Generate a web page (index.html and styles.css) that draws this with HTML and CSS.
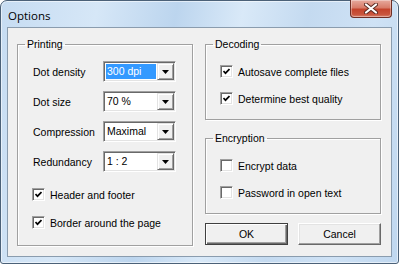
FILE: index.html
```html
<!DOCTYPE html>
<html lang="en">
<head>
  <meta charset="UTF-8" />
  <title>Options</title>
  <link rel="stylesheet" href="styles.css">
</head>
<body>
  <div class="window">
    <div class="titlebar">
      <span class="title">Options</span>
      <button class="close" type="button" aria-label="Close">
        <svg width="14" height="11" viewBox="0 0 14 11">
          <path d="M2 1.5 L12 9.5 M12 1.5 L2 9.5" stroke="#5a2a22" stroke-width="4" stroke-linecap="round" />
          <path d="M2 1.5 L12 9.5 M12 1.5 L2 9.5" stroke="#ffffff" stroke-width="2.2" stroke-linecap="round" />
        </svg>
      </button>
    </div>

    <div class="client">
      <fieldset class="group printing">
        <legend>Printing</legend>
        <div class="fields">
          <label>Dot density</label>
          <div class="combo">
            <span class="value selected">300 dpi</span>
            <span class="drop"><svg width="7" height="4" viewBox="0 0 7 4"><path d="M0 0 H7 L3.5 4 Z" fill="#000" /></svg></span>
          </div>

          <label>Dot size</label>
          <div class="combo">
            <span class="value">70 %</span>
            <span class="drop"><svg width="7" height="4" viewBox="0 0 7 4"><path d="M0 0 H7 L3.5 4 Z" fill="#000" /></svg></span>
          </div>

          <label>Compression</label>
          <div class="combo">
            <span class="value">Maximal</span>
            <span class="drop"><svg width="7" height="4" viewBox="0 0 7 4"><path d="M0 0 H7 L3.5 4 Z" fill="#000" /></svg></span>
          </div>

          <label>Redundancy</label>
          <div class="combo">
            <span class="value">1 : 2</span>
            <span class="drop"><svg width="7" height="4" viewBox="0 0 7 4"><path d="M0 0 H7 L3.5 4 Z" fill="#000" /></svg></span>
          </div>
        </div>

        <div class="checks">
          <label class="check"><span class="box"><svg width="7" height="7" viewBox="0 0 7 7"><path d="M0.5 3 L2.5 5.2 L6.5 1" stroke="#000" stroke-width="1.7" fill="none" /></svg></span>Header and footer</label>
          <label class="check"><span class="box"><svg width="7" height="7" viewBox="0 0 7 7"><path d="M0.5 3 L2.5 5.2 L6.5 1" stroke="#000" stroke-width="1.7" fill="none" /></svg></span>Border around the page</label>
        </div>
      </fieldset>

      <div class="side">
        <fieldset class="group small">
          <legend>Decoding</legend>
          <div class="checks">
            <label class="check"><span class="box"><svg width="7" height="7" viewBox="0 0 7 7"><path d="M0.5 3 L2.5 5.2 L6.5 1" stroke="#000" stroke-width="1.7" fill="none" /></svg></span>Autosave complete files</label>
            <label class="check"><span class="box"><svg width="7" height="7" viewBox="0 0 7 7"><path d="M0.5 3 L2.5 5.2 L6.5 1" stroke="#000" stroke-width="1.7" fill="none" /></svg></span>Determine best quality</label>
          </div>
        </fieldset>

        <fieldset class="group small">
          <legend>Encryption</legend>
          <div class="checks">
            <label class="check"><span class="box"></span>Encrypt data</label>
            <label class="check"><span class="box"></span>Password in open text</label>
          </div>
        </fieldset>

        <div class="buttons">
          <button class="btn default" type="button">OK</button>
          <button class="btn" type="button">Cancel</button>
        </div>
      </div>
    </div>
  </div>
</body>
</html>
```

FILE: styles.css
```css
* {
  box-sizing: border-box;
}

body {
  margin: 0;
  background: #ffffff;
  font-family: "Liberation Sans", Arial, sans-serif;
  font-size: 10.5px;
  color: #000;
}

.window {
  width: 399px;
  height: 264px;
  display: flex;
  flex-direction: column;
  padding: 0 6px 6px;
  border: 1px solid #4b6178;
  border-radius: 7px 7px 3px 3px;
  background: linear-gradient(100deg, #c6dcf2 0%, #d6e7f7 22%, #bcd5ee 40%, #d9e9f8 55%, #c4daf0 70%, #cfe2f5 85%, #bfd7ef 100%);
  box-shadow: inset 0 0 0 1px rgba(255, 255, 255, 0.55);
}

/* title bar */

.titlebar {
  height: 26px;
  display: flex;
  justify-content: space-between;
  align-items: flex-start;
}

.title {
  padding: 7px 0 0 1px;
  font-family: "Open Sans", sans-serif;
  font-size: 11.5px;
  line-height: 15px;
  color: #000;
}

.close {
  width: 42px;
  height: 18px;
  margin-top: -1px;
  padding: 0;
  display: flex;
  align-items: center;
  justify-content: center;
  border: 1px solid #6e2e25;
  border-top: none;
  border-radius: 0 0 4px 4px;
  background: linear-gradient(#e7aa9e 0%, #d87c6a 45%, #c4432c 55%, #c9553d 85%, #d98470 100%);
  box-shadow: inset 0 0 0 1px rgba(255, 255, 255, 0.35);
}

/* client area */

.client {
  flex: 1;
  display: flex;
  gap: 12px;
  padding: 10px 10px 10px 9px;
  border: 1px solid #8a9cae;
  background: #f0f0f0;
}

.group {
  margin: 0;
  padding: 0;
  min-width: 0;
  border: 1px solid #a0a0a0;
  box-shadow: 1px 1px 0 #fff, inset 1px 1px 0 #fff;
}

.group legend {
  margin-left: 7px;
  padding: 0 2px;
  line-height: 13px;
}

.printing {
  width: 176px;
}

.side {
  width: 176px;
  display: flex;
  flex-direction: column;
}

.small {
  height: 82px;
}

.small + .small {
  margin-top: 12px;
}

.fields {
  display: grid;
  grid-template-columns: 71px 73px;
  grid-auto-rows: 21px;
  row-gap: 9px;
  align-items: center;
  padding: 10px 0 0 14px;
}

.fields label {
  padding-left: 1px;
}

/* combo box */

.combo {
  height: 21px;
  display: flex;
  align-items: stretch;
  padding: 1px 0 1px 1px;
  background: #fff;
  border: 1px solid;
  border-color: #a0a0a0 #fff #fff #a0a0a0;
  box-shadow: inset 1px 1px 0 #696969, inset -1px -1px 0 #e3e3e3;
}

.value {
  flex: 1;
  margin: 1px;
  padding-left: 1px;
  line-height: 15px;
}

.value.selected {
  background: #3399ff;
  color: #fff;
}

.drop {
  width: 17px;
  margin-right: 1px;
  display: flex;
  align-items: center;
  justify-content: center;
  background: #f0f0f0;
  border: 1px solid;
  border-color: #e3e3e3 #696969 #696969 #e3e3e3;
  box-shadow: inset 1px 1px 0 #fff, inset -1px -1px 0 #a0a0a0;
}

/* checkboxes */

.checks {
  display: flex;
  flex-direction: column;
  gap: 14px;
  padding: 14px 0 0 14px;
}

.printing .checks {
  padding-top: 16px;
  gap: 15px;
}

.check {
  height: 13px;
  display: flex;
  align-items: center;
  gap: 5px;
  white-space: nowrap;
}

.box {
  width: 13px;
  height: 13px;
  display: flex;
  align-items: center;
  justify-content: center;
  background: #fff;
  border: 1px solid;
  border-color: #a0a0a0 #fff #fff #a0a0a0;
  box-shadow: inset 1px 1px 0 #696969, inset -1px -1px 0 #e3e3e3;
}

/* buttons */

.buttons {
  display: flex;
  justify-content: space-between;
  margin-top: 9px;
}

.btn {
  width: 83px;
  height: 22px;
  padding: 0;
  font-family: "Liberation Sans", Arial, sans-serif;
  font-size: 10.5px;
  color: #000;
  background: #f0f0f0;
  border: 1px solid;
  border-color: #fff #696969 #696969 #fff;
  box-shadow: inset -1px -1px 0 #a0a0a0, inset 1px 1px 0 #e3e3e3;
}

.btn.default {
  border-color: #404040;
  box-shadow: inset 1px 1px 0 #fff, inset -1px -1px 0 #696969, inset -2px -2px 0 #a0a0a0;
}
```
